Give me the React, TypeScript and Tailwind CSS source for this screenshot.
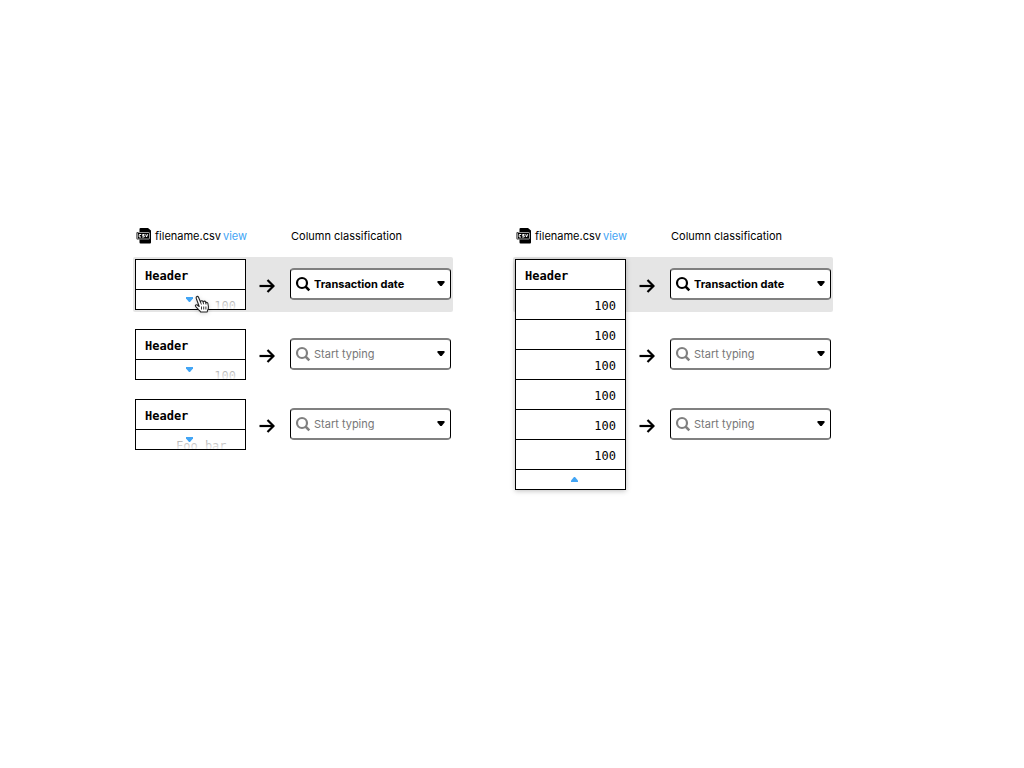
import { useState } from "react";

type Column = { header: string; values: string[]; align: "left" | "right"; type: string };

const columns: Column[] = [
  { header: "Header", values: ["100", "100", "100", "100", "100", "100"], align: "right", type: "Transaction date" },
  { header: "Header", values: ["100", "100", "100", "100", "100", "100"], align: "right", type: "" },
  { header: "Header", values: ["Foo bar"], align: "left", type: "" },
];

function CsvIcon() {
  return (
    <svg width="16" height="16" viewBox="0 0 16 16" aria-hidden="true">
      <path d="M4.500 0H12L15 2.500V14.500Q15 15.500 14 15.500H4.500Q3.500 15.500 3.500 14.500V1Q3.500 0 4.500 0Z" fill="#000" />
      <rect x="0.500" y="4" width="13" height="7.500" rx="1" fill="#000" />
      <rect x="1.500" y="4.500" width="12" height="6.500" rx="0.800" fill="#000" stroke="#fff" strokeWidth="0.600" />
      <g fill="none" stroke="#fff" strokeWidth="1">
        <path d="M5.200 6.500H3.200V9H5" />
        <path d="M8.500 6.500H6.600V7.700H8.200V9H6.200" />
        <path d="M9.700 6.200L10.500 9L11.700 6.200" />
      </g>
    </svg>
  );
}

function SearchIcon() {
  return (
    <svg width="16" height="16" viewBox="0 0 16 16" fill="none" stroke="currentColor" aria-hidden="true">
      <circle cx="7" cy="7" r="5" strokeWidth="2.200" />
      <path d="M10.500 10.500L14.300 14.300" strokeWidth="2.500" />
    </svg>
  );
}

function ArrowIcon() {
  return (
    <svg width="16" height="14" viewBox="0 0 16 14" fill="none" stroke="#000" strokeWidth="2.200" aria-hidden="true">
      <path d="M0.500 7H14.500" />
      <path d="M8.500 1L14.500 7L8.500 13" />
    </svg>
  );
}

function Triangle({ up = false }: { up?: boolean }) {
  return (
    <svg width="7" height="5" viewBox="0 0 7 5" fill="currentColor" aria-hidden="true">
      <path d={up ? "M3 0H4L7 3.500V5H0V3.500Z" : "M0 0H7V1.500L4 5H3L0 1.500Z"} />
    </svg>
  );
}

function HandCursor() {
  return (
    <svg width="16" height="19" viewBox="0 0 16 19" className="drop-shadow-sm" aria-hidden="true">
      <path
        d="M5.200 11.500L2.200 3.200C1.700 1.600 3.700 0.700 4.500 2.200L6.500 7C6.500 5.600 8.500 5.200 9 6.500L9.200 7.200C9.500 5.900 11.200 5.800 11.600 7L11.800 7.900C12.400 7 13.700 7.300 13.900 8.500L14.400 11.500C14.700 13.500 14.200 14.500 13.500 15.500L13.200 17H6.600L6.200 16.200C4.800 15.200 3.500 13.200 1.800 11.600C0.700 10.500 1.900 9.200 3.200 10Z"
        fill="#fff"
        stroke="#222"
        strokeWidth="1.100"
        strokeLinejoin="round"
      />
      <path d="M7.500 11.500V14.500M9.700 11.500V14.500M11.900 11.500V14.500M6.500 7L7.400 9.500M9.200 7.200L9.600 9.300M11.800 7.900L12 9.500" stroke="#222" strokeWidth="0.900" fill="none" />
    </svg>
  );
}

const tableClass = "w-full border-separate border-spacing-0 font-['DejaVu_Sans_Mono',monospace] text-xs";
const headClass = "h-[30px] border-b border-black px-[9px] pt-0.5 pb-0 text-left font-bold";

function ColumnPreview({ column, expanded, onToggle }: { column: Column; expanded: boolean; onToggle: () => void }) {
  if (expanded) {
    return (
      <div className="absolute inset-x-0 top-0 z-10 border border-black bg-white shadow-[0_1px_5px_rgba(0,0,0,0.25)]">
        <table className={tableClass}>
          <thead>
            <tr>
              <th className={headClass}>{column.header}</th>
            </tr>
          </thead>
          <tbody className={column.align === "right" ? "text-right" : "text-left"}>
            {column.values.map((value, i) => (
              <tr key={i}>
                <td className="h-[30px] border-b border-black px-[9px] pt-0.5 pb-0">{value}</td>
              </tr>
            ))}
          </tbody>
        </table>
        <button type="button" aria-label="Collapse column" onClick={onToggle} className="flex h-[19px] w-full items-center justify-center pl-2 text-[#42a5f5]">
          <Triangle up />
        </button>
      </div>
    );
  }
  return (
    <div className="relative h-full overflow-hidden border border-black bg-white">
      <table className={tableClass}>
        <thead>
          <tr>
            <th className={headClass}>{column.header}</th>
          </tr>
        </thead>
        <tbody className={column.align === "right" ? "text-right" : "text-left"}>
          <tr className="text-[#444]">
            <td className={column.align === "right" ? "h-[30px] px-[9px] pt-0.5 pb-0" : "h-[30px] pt-0.5 pb-0 pl-10"}>{column.values[0]}</td>
          </tr>
        </tbody>
      </table>
      <button
        type="button"
        aria-label="Expand column"
        onClick={onToggle}
        className="absolute inset-x-0 bottom-0 flex h-[19px] items-center justify-center bg-linear-to-b from-white/20 to-white/90 pr-0.5 text-[#42a5f5]"
      >
        <Triangle />
      </button>
    </div>
  );
}

function TypePicker({ id, initial }: { id: string; initial: string }) {
  const [value, setValue] = useState(initial);
  return (
    <div className="mt-[9px] flex h-8 min-w-0 flex-1 items-center rounded-[4px] border-x border-y-2 border-x-black border-y-[#808080] bg-white pr-[5px] pl-1">
      <label htmlFor={id} aria-label="Column classification" className={value ? "text-black" : "text-[#808080]"}>
        <SearchIcon />
      </label>
      <input
        id={id}
        value={value}
        placeholder="Start typing"
        onChange={(e) => setValue(e.target.value)}
        className="ml-[3px] min-w-0 flex-1 bg-transparent text-[11px] leading-4 font-bold text-black outline-none placeholder:font-normal placeholder:text-[#777]"
      />
      <button type="button" aria-label="Show options" className="text-black">
        <svg width="8" height="6" viewBox="0 0 8 6" aria-hidden="true">
          <path d="M0.500 0H7.500V1.500L4.700 5H3.300L0.500 1.500Z" fill="currentColor" />
        </svg>
      </button>
    </div>
  );
}

function Panel({ name, open, hovered = false }: { name: string; open: number | null; hovered?: boolean }) {
  const [openIndex, setOpenIndex] = useState(open);
  return (
    <section className="w-80">
      <header className="flex h-4 items-center pl-[3px] text-[11px] leading-4">
        <div className="flex flex-1 items-center">
          <CsvIcon />
          <span className="ml-[3px]">filename.csv</span>
          <a href="#view" className="ml-0.5 text-[#42a5f5]">view</a>
        </div>
        <h2 className="w-[162px]">Column classification</h2>
      </header>
      <div className="mt-[13px] flex flex-col gap-[15px]">
        {columns.map((column, i) => (
          <div key={i} className={i === 0 ? "flex items-start rounded-[2px] bg-[#e5e5e5] p-0.5" : "flex items-start p-0.5"}>
            <div className="relative h-[51px] w-[111px]">
              {(openIndex === null || openIndex === i) && (
                <ColumnPreview column={column} expanded={openIndex === i} onToggle={() => setOpenIndex(openIndex === i ? null : i)} />
              )}
              {hovered && i === 0 && (
                <div className="pointer-events-none absolute top-9 left-[59px] z-20">
                  <HandCursor />
                </div>
              )}
            </div>
            <div className="flex w-11 justify-center pt-5 pr-0.5">
              <ArrowIcon />
            </div>
            <TypePicker id={`${name}-${i}`} initial={column.type} />
          </div>
        ))}
      </div>
    </section>
  );
}

export default function App() {
  return (
    <main className="flex min-h-screen items-start gap-[60px] bg-white pt-[228px] pl-[133px] font-['Inter',sans-serif] text-black">
      <Panel name="collapsed" open={null} hovered />
      <Panel name="expanded" open={0} />
    </main>
  );
}
